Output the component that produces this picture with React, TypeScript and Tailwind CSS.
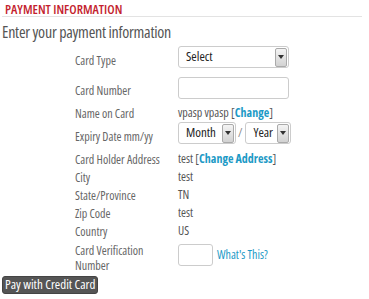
import { ReactNode } from "react";

function Arrow() {
  return (
    <span className="flex h-[19px] w-[12px] items-center justify-center rounded-[2px] border border-[#aaa] bg-gradient-to-b from-[#f4f4f4] to-[#d2d2d2]">
      <svg width="6" height="4" viewBox="0 0 6 4">
        <path d="M0 0 L6 0 L3 4 Z" fill="#333" />
      </svg>
    </span>
  );
}

function FakeSelect({ label, width }: { label: string; width: string }) {
  return (
    <div
      className={`flex h-[22px] ${width} items-center justify-between rounded-[3px] border border-[#ccc] bg-white pl-[7px] pr-[1px] text-[13px] text-[#222]`}
    >
      <span>{label}</span>
      <Arrow />
    </div>
  );
}

function Row({
  label,
  children,
  h,
  field,
  className = "",
}: {
  label: ReactNode;
  children?: ReactNode;
  h: string;
  field?: boolean;
  className?: string;
}) {
  return (
    <div className={`flex ${h} items-center ${className}`}>
      <div
        className={`w-[103px] shrink-0 text-[12px] leading-[17px] text-[#666] ${field ? "pt-[6px]" : ""}`}
      >
        {label}
      </div>
      <div className="flex items-center text-[12px] text-[#555]">{children}</div>
    </div>
  );
}

export default function App() {
  return (
    <div className="h-[299px] w-[369px] bg-white font-['Open_Sans',sans-serif] font-stretch-condensed">
      <div className="ml-[2px] mr-[7px] h-[17px] border-b border-[#e3e3e3] pl-[3px] pt-[2px]">
        <h2 className="text-[13px] leading-[14px] font-semibold text-[#c41f2f]">PAYMENT INFORMATION</h2>
      </div>
      <p className="pl-[2px] pt-[7px] text-[16px] leading-[16px] tracking-[-0.25px] text-[#555]">
        Enter your payment information
      </p>

      <div className="pl-[75px] pt-[4px]">
        <Row label="Card Type" h="h-[26px]" field>
          <FakeSelect label="Select" width="w-[111px]" />
        </Row>
        <Row label="Card Number" h="h-[35px]" field>
          <div className="h-[22px] w-[111px] rounded-[3px] border border-[#ccc] bg-white" />
        </Row>
        <Row label="Name on Card" h="h-[16px]">
          vpasp vpasp [<a className="font-bold text-[#1d9ac6]">Change</a>]
        </Row>
        <Row label="Expiry Date mm/yy" h="h-[24px]" field>
          <FakeSelect label="Month" width="w-[58px]" />
          <span className="ml-[2px] mr-[3px] text-[#888]">/</span>
          <FakeSelect label="Year" width="w-[46px]" />
        </Row>
        <Row label="Card Holder Address" h="h-[18px]" className="mt-[5px]">
          test [<a className="font-bold text-[#1d9ac6]">Change Address</a>]
        </Row>
        <Row label="City" h="h-[18px]">test</Row>
        <Row label="State/Province" h="h-[18px]">TN</Row>
        <Row label="Zip Code" h="h-[18px]">test</Row>
        <Row label="Country" h="h-[18px]">US</Row>
        <div className="flex h-[36px] items-start pt-[3px]">
          <div className="w-[103px] shrink-0 text-[12px] leading-[15px] text-[#666]">
            Card Verification
            <br />
            Number
          </div>
          <div className="mt-[1px] flex items-center">
            <div className="h-[22px] w-[35px] rounded-[3px] border border-[#ccc] bg-white" />
            <a className="ml-[4px] text-[12px] text-[#1d9ac6]">What's This?</a>
          </div>
        </div>
      </div>

      <button className="ml-[2px] flex h-[18px] items-center rounded-[3px] border border-[#444] bg-[#555] px-[2px] text-[13px] text-white">
        Pay with Credit Card
      </button>
    </div>
  );
}
